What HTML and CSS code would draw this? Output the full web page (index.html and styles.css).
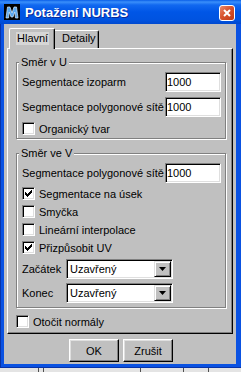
FILE: index.html
```html
<!DOCTYPE html>
<html>
<head>
    <title>Potažení NURBS</title>
    <link rel="stylesheet" href="styles.css">
</head>
<body>
    <div class="window">
        <div class="titlebar">
            <svg class="app-icon" viewBox="0 0 16 16">
                <rect width="16" height="16" fill="#000"/>
                <path d="M2 14 L3.5 3 H6 L8 9 L10 3 H12.5 L14 14 H11.5 L10.8 8 L9 13 H7 L5.2 8 L4.5 14 Z" fill="#5aa8f0" stroke="#d8ecff" stroke-width="0.7"/>
            </svg>
            <span class="title">Potažení NURBS</span>
            <div class="close">
                <svg viewBox="0 0 14 14" width="14" height="14">
                    <path d="M4 4 L10 10 M10 4 L4 10" stroke="#fff" stroke-width="2"/>
                </svg>
            </div>
        </div>

        <div class="client">
            <div class="tabs">
                <div class="tab active"><span class="focus">Hlavní</span></div>
                <div class="tab"><span>Detaily</span></div>
            </div>

            <div class="panel">
                <fieldset class="group group-u">
                    <legend>Směr v U</legend>
                    <div class="row">
                        <span>Segmentace izoparm</span>
                        <input class="field" type="text" value="1000">
                    </div>
                    <div class="row">
                        <span>Segmentace polygonové sítě</span>
                        <input class="field" type="text" value="1000">
                    </div>
                    <div class="check-row">
                        <span class="check"></span>
                        <span>Organický tvar</span>
                    </div>
                </fieldset>

                <fieldset class="group group-v">
                    <legend>Směr ve V</legend>
                    <div class="row">
                        <span>Segmentace polygonové sítě</span>
                        <input class="field" type="text" value="1000">
                    </div>
                    <div class="check-row first">
                        <span class="check checked"><svg viewBox="0 0 11 11" width="11" height="11"><path d="M2 4 H3 V5 H4 V6 H5 V5 H6 V4 H7 V3 H8 V2 H9 V5 H8 V6 H7 V7 H6 V8 H5 V9 H4 V8 H3 V7 H2 Z" fill="#000" shape-rendering="crispEdges"/></svg></span>
                        <span>Segmentace na úsek</span>
                    </div>
                    <div class="check-row">
                        <span class="check"></span>
                        <span>Smyčka</span>
                    </div>
                    <div class="check-row">
                        <span class="check"></span>
                        <span>Lineární interpolace</span>
                    </div>
                    <div class="check-row">
                        <span class="check checked"><svg viewBox="0 0 11 11" width="11" height="11"><path d="M2 4 H3 V5 H4 V6 H5 V5 H6 V4 H7 V3 H8 V2 H9 V5 H8 V6 H7 V7 H6 V8 H5 V9 H4 V8 H3 V7 H2 Z" fill="#000" shape-rendering="crispEdges"/></svg></span>
                        <span>Přizpůsobit UV</span>
                    </div>
                    <div class="combo-row">
                        <span class="combo-label">Začátek</span>
                        <div class="combo">
                            <span class="combo-text">Uzavřený</span>
                            <span class="drop"><svg viewBox="0 0 7 4" width="7" height="4"><path d="M0 0 H7 L3.5 4 Z" fill="#000"/></svg></span>
                        </div>
                    </div>
                    <div class="combo-row last">
                        <span class="combo-label">Konec</span>
                        <div class="combo">
                            <span class="combo-text">Uzavřený</span>
                            <span class="drop"><svg viewBox="0 0 7 4" width="7" height="4"><path d="M0 0 H7 L3.5 4 Z" fill="#000"/></svg></span>
                        </div>
                    </div>
                </fieldset>

                <div class="check-row flip">
                    <span class="check"></span>
                    <span>Otočit normály</span>
                </div>
            </div>

            <div class="buttons">
                <button class="btn">OK</button>
                <button class="btn">Zrušit</button>
            </div>
        </div>
    </div>
    <div class="desktop">
        <span class="seg s1"></span>
        <span class="seg s2"></span>
        <span class="seg s3"></span>
        <span class="seg s4"></span>
        <span class="seg s5"></span>
    </div>
</body>
</html>
```

FILE: styles.css
```css
* {
    box-sizing: border-box;
}
body {
    margin: 0;
    width: 241px;
    height: 372px;
    overflow: hidden;
    background: #e4e4e4;
    font-family: "Liberation Sans", Arial, sans-serif;
    font-size: 11px;
    color: #000;
}
.window {
    height: 368px;
    display: flex;
    flex-direction: column;
    background: #0a52e2;
    box-shadow: inset 1px 0 #0833a8, inset 0 -1px #0833a8;
}
.titlebar {
    height: 24px;
    flex: none;
    display: flex;
    align-items: center;
    padding: 0 6px 0 4px;
    background: linear-gradient(#0a5ee8 0, #3a8ffa 2px, #1168f0 5px, #0056e6 12px, #0053e0 20px, #0049cf 24px);
    color: #fff;
}
.app-icon {
    width: 16px;
    height: 16px;
    flex: none;
}
.title {
    flex: 1;
    margin-left: 5px;
    font-size: 13px;
    font-weight: bold;
    white-space: nowrap;
    text-shadow: 1px 1px #0a2a98;
}
.close {
    width: 16px;
    height: 16px;
    margin-top: 1px;
    display: flex;
    align-items: center;
    justify-content: center;
    border: 1px solid #fff;
    border-radius: 3px;
    background: linear-gradient(135deg, #ea8a6c 0, #d8532e 45%, #c13a14 100%);
}
.client {
    flex: 1;
    margin: 0 5px 4px 4px;
    padding-top: 4px;
    background: #c0c0c0;
    display: flex;
    flex-direction: column;
}

/* tabs */
.tabs {
    height: 20px;
    display: flex;
    align-items: flex-end;
    padding-left: 5px;
}
.tab {
    width: 46px;
    height: 18px;
    padding: 1px 0 0 8px;
    border: 1px solid;
    border-color: #fff #000 transparent #fff;
    border-bottom: none;
    border-radius: 2px 2px 0 0;
    box-shadow: inset -1px 0 #808080;
    background: #c0c0c0;
    line-height: 13px;
    margin-left: -2px;
}
.tab.active {
    height: 21px;
    margin-left: 0;
    margin-bottom: -1px;
    padding: 3px 0 0 6px;
    position: relative;
    z-index: 1;
}
.focus {
    display: inline-block;
    padding: 0 1px;
    background: #d6d6d6;
}

/* panel */
.panel {
    height: 286px;
    margin: 0 3px;
    padding: 0 6px 0 8px;
    border: 1px solid;
    border-color: #fff #000 #000 #fff;
    box-shadow: inset -1px -1px #808080;
    display: flex;
    flex-direction: column;
}
.group {
    margin: 0;
    min-width: 0;
    padding: 3px 4px 3px 5px;
    border: 1px solid #808080;
    box-shadow: 1px 1px #fff, inset 1px 1px #fff;
    display: flex;
    flex-direction: column;
    gap: 5px;
}
.group legend {
    margin-left: -3px;
    padding: 0 2px;
    line-height: 13px;
    background: #c0c0c0;
}
.group-u {
    margin-top: 7px;
}
.group-v {
    margin-top: 8px;
    padding-bottom: 4px;
}
.row {
    height: 20px;
    display: flex;
    align-items: center;
    justify-content: space-between;
    white-space: nowrap;
}
.field {
    width: 56px;
    height: 20px;
    margin: 0;
    padding: 0 1px;
    border: 1px solid;
    border-color: #808080 #fff #fff #808080;
    box-shadow: inset 1px 1px #000, inset -1px -1px #dfdfdf;
    background: #fff;
    font: inherit;
    color: #000;
}
.check-row {
    height: 13px;
    display: flex;
    align-items: center;
    gap: 4px;
    white-space: nowrap;
}
.check-row.first {
    margin-top: -1px;
}
.check {
    width: 13px;
    height: 13px;
    flex: none;
    border: 1px solid;
    border-color: #808080 #fff #fff #808080;
    box-shadow: inset 1px 1px #000, inset -1px -1px #dfdfdf;
    background: #fff;
}
.check svg {
    display: block;
}
.flip {
    margin-top: 7px;
    gap: 4px;
}
.combo-row {
    height: 20px;
    display: flex;
    align-items: center;
}
.combo-row.last {
    margin-top: -1px;
}
.combo-label {
    width: 44px;
}
.combo {
    width: 107px;
    height: 20px;
    padding: 1px;
    display: flex;
    border: 1px solid;
    border-color: #808080 #fff #fff #808080;
    box-shadow: inset 1px 1px #000, inset -1px -1px #dfdfdf;
    background: #fff;
}
.combo-text {
    flex: 1;
    padding-left: 2px;
    line-height: 16px;
}
.drop {
    width: 17px;
    height: 16px;
    display: flex;
    align-items: center;
    justify-content: center;
    border: 1px solid;
    border-color: #dfdfdf #000 #000 #dfdfdf;
    box-shadow: inset 1px 1px #fff, inset -1px -1px #808080;
    background: #c0c0c0;
}

/* buttons */
.buttons {
    margin-top: 5px;
    display: flex;
    gap: 4px;
    padding-left: 65px;
}
.btn {
    width: 50px;
    height: 23px;
    padding: 0;
    border: 1px solid;
    border-color: #fff #000 #000 #fff;
    box-shadow: inset -1px -1px #808080, inset 1px 1px #dfdfdf;
    background: #c0c0c0;
    font: inherit;
    color: #000;
}

/* strip of what lies under the window */
.desktop {
    height: 4px;
    display: flex;
}
.seg {
    height: 4px;
    border-right: 1px solid #505050;
}
.s1 { width: 39px; }
.s2 { width: 5px; }
.s3 { width: 97px; }
.s4 { width: 43px; }
.s5 { width: 25px; }
```
